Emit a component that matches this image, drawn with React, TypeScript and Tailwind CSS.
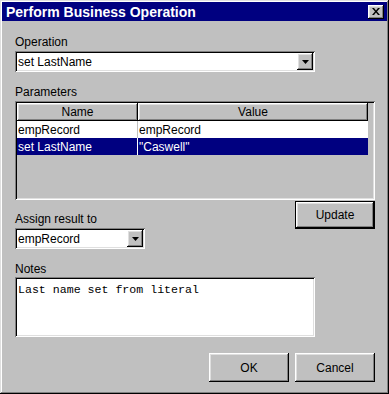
import React from "react";

const raised =
  "shadow-[inset_-1px_-1px_0_#000,inset_1px_1px_0_#fff,inset_-2px_-2px_0_#808080,inset_2px_2px_0_#dfdfdf]";
const sunken =
  "shadow-[inset_1px_1px_0_#808080,inset_-1px_-1px_0_#fff,inset_2px_2px_0_#000,inset_-2px_-2px_0_#dfdfdf]";

const Arrow = () => (
  <svg width="7" height="4" viewBox="0 0 7 4">
    <polygon points="0,0 7,0 3.5,4" fill="#000" />
  </svg>
);

const Combo = ({ value, width }: { value: string; width: string }) => (
  <div className={`${width} h-[21px] bg-white ${sunken} flex items-center pl-[3px] pr-[2px]`}>
    <span className="flex-1 leading-none">{value}</span>
    <div className={`w-[16px] h-[17px] bg-[#c0c0c0] ${raised} flex items-center justify-center`}>
      <Arrow />
    </div>
  </div>
);

const Button = ({ label, isDefault }: { label: string; isDefault?: boolean }) => (
  <div
    className={`w-[80px] ${isDefault ? "h-[28px] border border-black" : "h-[29px]"} bg-[#c0c0c0] flex`}
  >
    <div className={`flex-1 ${raised} flex items-center justify-center`}>{label}</div>
  </div>
);

export default function App() {
  return (
    <div className="w-[389px] h-[394px] bg-[#c0c0c0] p-[2px] flex flex-col font-['Liberation_Sans',Arial,sans-serif] text-[12px] text-black shadow-[inset_-1px_-1px_0_#000,inset_1px_1px_0_#dfdfdf,inset_-2px_-2px_0_#808080,inset_2px_2px_0_#fff]">
      {/* title bar */}
      <div className="h-[19px] bg-[#000080] flex items-center justify-between pl-[4px] pr-[3px]">
        <span className="text-white font-bold text-[14px] leading-none">Perform Business Operation</span>
        <div className={`w-[16px] h-[14px] bg-[#c0c0c0] ${raised} flex items-center justify-center`}>
          <svg width="8" height="7" viewBox="0 0 8 7">
            <path d="M0 0 L2 0 L4 2.5 L6 0 L8 0 L5 3.5 L8 7 L6 7 L4 4.5 L2 7 L0 7 L3 3.5 Z" fill="#000" />
          </svg>
        </div>
      </div>

      <div className="ml-[13px] w-[360px] flex flex-col">
        <div className="mt-[14px] h-[14px] leading-[14px]">Operation</div>
        <div className="mt-[2px]">
          <Combo value="set LastName" width="w-[300px]" />
        </div>

        <div className="mt-[13px] h-[14px] leading-[14px]">Parameters</div>
        <div className={`mt-[2px] w-[360px] h-[99px] bg-[#c0c0c0] ${sunken} p-[2px]`}>
          <div className="w-[351px] flex flex-col">
            <div className="flex h-[18px]">
              <div className={`w-[121px] ${raised} flex items-center justify-center`}>Name</div>
              <div className={`flex-1 ${raised} flex items-center justify-center`}>Value</div>
            </div>
            <div className="flex h-[17px] bg-white">
              <div className="w-[121px] border-r border-[#c0c0c0] pl-[1px] flex items-center">empRecord</div>
              <div className="flex-1 pl-[1px] flex items-center">empRecord</div>
            </div>
            <div className="flex h-[17px] bg-[#000080] text-white">
              <div className="w-[121px] border-r border-white pl-[1px] flex items-center">set LastName</div>
              <div className="flex-1 pl-[1px] flex items-center">"Caswell"</div>
            </div>
          </div>
        </div>

        <div className="flex justify-between">
          <div className="flex flex-col">
            <div className="mt-[12px] h-[14px] leading-[14px]">Assign result to</div>
            <div className="mt-[2px]">
              <Combo value="empRecord" width="w-[130px]" />
            </div>
          </div>
          <div className="mt-[1px]">
            <Button label="Update" isDefault />
          </div>
        </div>

        <div className="mt-[13px] h-[14px] leading-[14px]">Notes</div>
        <div className={`mt-[1px] w-[300px] h-[60px] bg-white ${sunken} pl-[3px] pt-[3px]`}>
          <span className="font-['Liberation_Mono','Courier_New',monospace] text-[11.6px] leading-[14px]">
            Last name set from literal
          </span>
        </div>

        <div className="mt-[16px] flex justify-end gap-[6px]">
          <Button label="OK" />
          <Button label="Cancel" />
        </div>
      </div>
    </div>
  );
}
